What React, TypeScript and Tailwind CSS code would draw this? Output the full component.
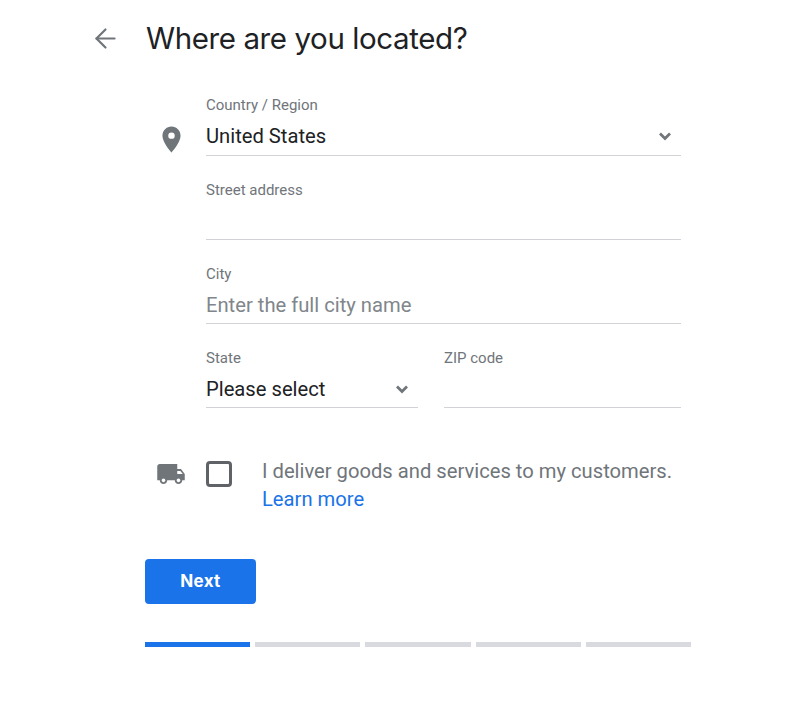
import React from 'react';
import { ArrowLeft } from 'lucide-react';

const roboto = { fontFamily: 'Roboto, sans-serif' };

const Chevron = () => (
  <svg width="24" height="24" viewBox="0 0 24 24" fill="none" stroke="#70757a" strokeWidth="2.7">
    <path d="M7 9.5l5 5 5-5" />
  </svg>
);

const PinIcon = () => (
  <svg width="31" height="31" viewBox="0 0 24 24" fill="#70757a">
    <path d="M12 2C8.13 2 5 5.13 5 9c0 5.25 7 13 7 13s7-7.75 7-13c0-3.87-3.13-7-7-7zm0 9.5a2.5 2.5 0 1 1 0-5 2.5 2.5 0 0 1 0 5z" />
  </svg>
);

const TruckIcon = () => (
  <svg width="30" height="30" viewBox="0 0 24 24" fill="#70757a">
    <path d="M20 8h-3V4H3c-1.1 0-2 .9-2 2v11h2c0 1.66 1.34 3 3 3s3-1.34 3-3h6c0 1.66 1.34 3 3 3s3-1.34 3-3h2v-5l-3-4zM6 18.5c-.83 0-1.5-.67-1.5-1.5s.67-1.5 1.5-1.5 1.5.67 1.5 1.5-.67 1.5-1.5 1.5zm13.5-9 1.96 2.5H17V9.5h2.5zm-1.5 9c-.83 0-1.5-.67-1.5-1.5s.67-1.5 1.5-1.5 1.5.67 1.5 1.5-.67 1.5-1.5 1.5z" />
  </svg>
);

const Field = ({ label, value, placeholder, chevron, className, labelClass }: { label: string; value?: string; placeholder?: string; chevron?: boolean; className?: string; labelClass?: string }) => (
  <div className={`h-[59px] flex flex-col border-b border-[#d2d3d6] ${className || ''}`}>
    <div className={`text-[15px] leading-[18px] text-[#70757a] ${labelClass || ''}`}>{label}</div>
    <div className="flex items-center justify-between h-[34px] mt-[5px]">
      <span className={`text-[20.2px] leading-[34px] ${value ? 'text-[#202124]' : 'text-[#80868b]'}`}>{value || placeholder}</span>
      {chevron && <span className="mr-[4px]"><Chevron /></span>}
    </div>
  </div>
);

export default function App() {
  return (
    <div className="w-[800px] h-[709px] bg-white overflow-hidden pl-[92px]" style={roboto}>
      <div className="flex items-center h-[76px]">
        <ArrowLeft className="w-[31px] h-[31px] text-[#70757a] ml-[-2px] mr-[25px]" strokeWidth={1.7} />
        <h1 className="text-[29.5px] leading-[40px] text-[#202124] font-normal tracking-[-0.4px]" style={{ fontFamily: 'Inter, sans-serif' }}>Where are you located?</h1>
      </div>

      <div className="flex mt-[21px]">
        <div className="w-[114px] pl-[63.5px] pt-[26.5px]"><PinIcon /></div>
        <div className="w-[475px] flex flex-col gap-[25px]">
          <Field label="Country / Region" value="United States" chevron labelClass="mt-[-1px]" />
          <Field label="Street address" />
          <Field label="City" placeholder="Enter the full city name" />
          <div className="flex gap-[26px]">
            <Field label="State" value="Please select" chevron className="w-[212px]" />
            <Field label="ZIP code" className="w-[237px]" />
          </div>
        </div>
      </div>

      <div className="flex mt-[51px]">
        <div className="w-[114px] pl-[64px]"><TruckIcon /></div>
        <div className="w-[26px] h-[26px] border-[3px] border-[#5f6368] rounded-[4px] mt-[2px]" />
        <div className="ml-[30px] text-[20.2px] leading-[28px] text-[#70757a] mt-[-2px]">
          <div>I deliver goods and services to my customers.</div>
          <a className="text-[#1a73e8]">Learn more</a>
        </div>
      </div>

      <div className="ml-[53px] mt-[46px]">
        <button className="w-[111px] h-[45px] bg-[#1a73e8] rounded-[4px] text-white text-[17px] font-bold tracking-[0.3px]" style={{ fontFamily: 'Inter, sans-serif' }}>Next</button>
        <div className="flex gap-[5px] mt-[38px] w-[546px]">
          <div className="flex-1 h-[5px] bg-[#1a73e8]" />
          <div className="flex-1 h-[5px] bg-[#d9dae0]" />
          <div className="flex-1 h-[5px] bg-[#d9dae0]" />
          <div className="flex-1 h-[5px] bg-[#d9dae0]" />
          <div className="flex-1 h-[5px] bg-[#d9dae0]" />
        </div>
      </div>
    </div>
  );
}
